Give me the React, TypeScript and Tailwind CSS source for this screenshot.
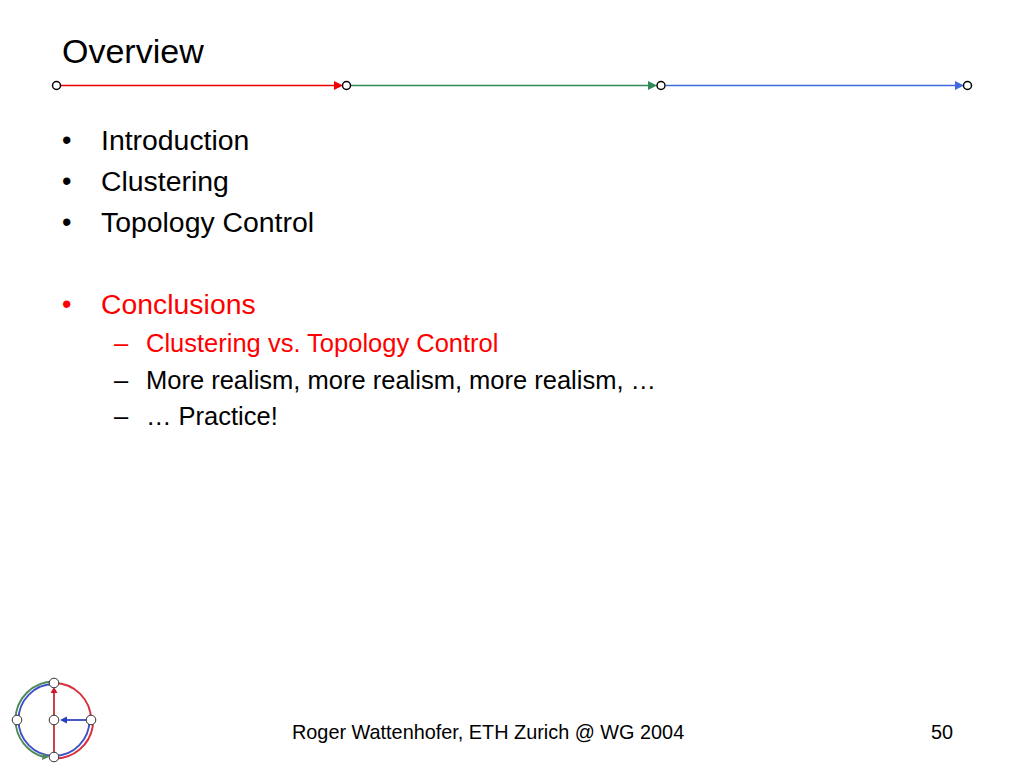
const font = { fontFamily: '"Liberation Sans", Arial, sans-serif' };

function Bar() {
  return (
    <svg width="1024" height="20" viewBox="0 76 1024 20" className="block">
      <line x1="61" y1="85.5" x2="336" y2="85.5" stroke="#f00000" strokeWidth="1.4" />
      <polygon points="334,81 343,85.5 334,90" fill="#f00000" />
      <line x1="351" y1="85.5" x2="651" y2="85.5" stroke="#2e8b57" strokeWidth="1.4" />
      <polygon points="648,81 657,85.5 648,90" fill="#2e8b57" />
      <line x1="666" y1="85.5" x2="957" y2="85.5" stroke="#4169e1" strokeWidth="1.4" />
      <polygon points="955,81 964,85.5 955,90" fill="#4169e1" />
      {[56.5, 346.5, 661, 967.5].map((x) => (
        <circle key={x} cx={x} cy="85.5" r="4" fill="#fff" stroke="#000" strokeWidth="1.5" />
      ))}
    </svg>
  );
}

function Logo() {
  return (
    <svg width="110" height="98" viewBox="0 670 110 98" className="block">
      <path d="M54 684 A35.5 36 0 0 0 18.5 720 A35.5 36 0 0 0 54 756 A35.5 36 0 0 0 89.5 720" fill="none" stroke="#3f51c5" strokeWidth="1.9" />
      <path d="M54 683 A37 37 0 0 1 91 720 C93 722 93 723 92.8 726 A38.5 38 0 0 1 54 758.5" fill="none" stroke="#d8303f" strokeWidth="1.9" />
      <path d="M54 681.5 A38.5 38.5 0 0 0 15.5 720 A38.5 38.5 0 0 0 44 757" fill="none" stroke="#4f8a5b" strokeWidth="1.9" />
      <polygon points="43,753 49,757 42,760" fill="#4f8a5b" />
      <line x1="54" y1="757" x2="54" y2="692" stroke="#c8384a" strokeWidth="1.9" />
      <polygon points="50.5,693 54,687 57.5,693" fill="#d01828" />
      <line x1="91" y1="720" x2="66" y2="720" stroke="#3f51c5" strokeWidth="1.9" />
      <polygon points="67,716.5 60,720 67,723.5" fill="#2a3cc0" />
      {[[54, 683], [17, 720], [54, 720], [91, 720], [54, 757]].map(([x, y]) => (
        <circle key={`${x}-${y}`} cx={x} cy={y} r="4.8" fill="#fff" stroke="#333" strokeWidth="1" />
      ))}
    </svg>
  );
}

function Main({ text, red, className = "" }: { text: string; red?: boolean; className?: string }) {
  return (
    <div className={`flex h-[41px] items-center text-[28.4px] ${red ? "text-[#ff0000]" : "text-black"} ${className}`}>
      <span className="w-[39px] text-[27px]">•</span>
      <span>{text}</span>
    </div>
  );
}

function Sub({ text, red }: { text: string; red?: boolean }) {
  return (
    <div className={`flex h-[36.5px] items-center pl-[52px] text-[25.5px] ${red ? "text-[#ff0000]" : "text-black"}`}>
      <span className="w-[32px]">–</span>
      <span>{text}</span>
    </div>
  );
}

export default function App() {
  return (
    <div style={font} className="flex h-[768px] w-[1024px] flex-col overflow-hidden bg-white">
      <h1 className="h-[76px] pl-[62px] pt-[30px] text-[34px] leading-[42px] text-black">Overview</h1>
      <Bar />
      <div className="flex-1 pl-[62px] pt-[24px]">
        <Main text="Introduction" />
        <Main text="Clustering" />
        <Main text="Topology Control" />
        <Main text="Conclusions" red className="mt-[41px]" />
        <Sub text="Clustering vs. Topology Control" red />
        <Sub text="More realism, more realism, more realism, …" />
        <Sub text="… Practice!" />
      </div>
      <div className="flex h-[98px] items-start">
        <Logo />
        <div className="ml-[182px] mt-[49px] w-[639px] text-[19.85px] leading-[26px] text-black">
          Roger Wattenhofer, ETH Zurich @ WG 2004
        </div>
        <div className="mt-[49px] text-[19.85px] leading-[26px] text-black">50</div>
      </div>
    </div>
  );
}
